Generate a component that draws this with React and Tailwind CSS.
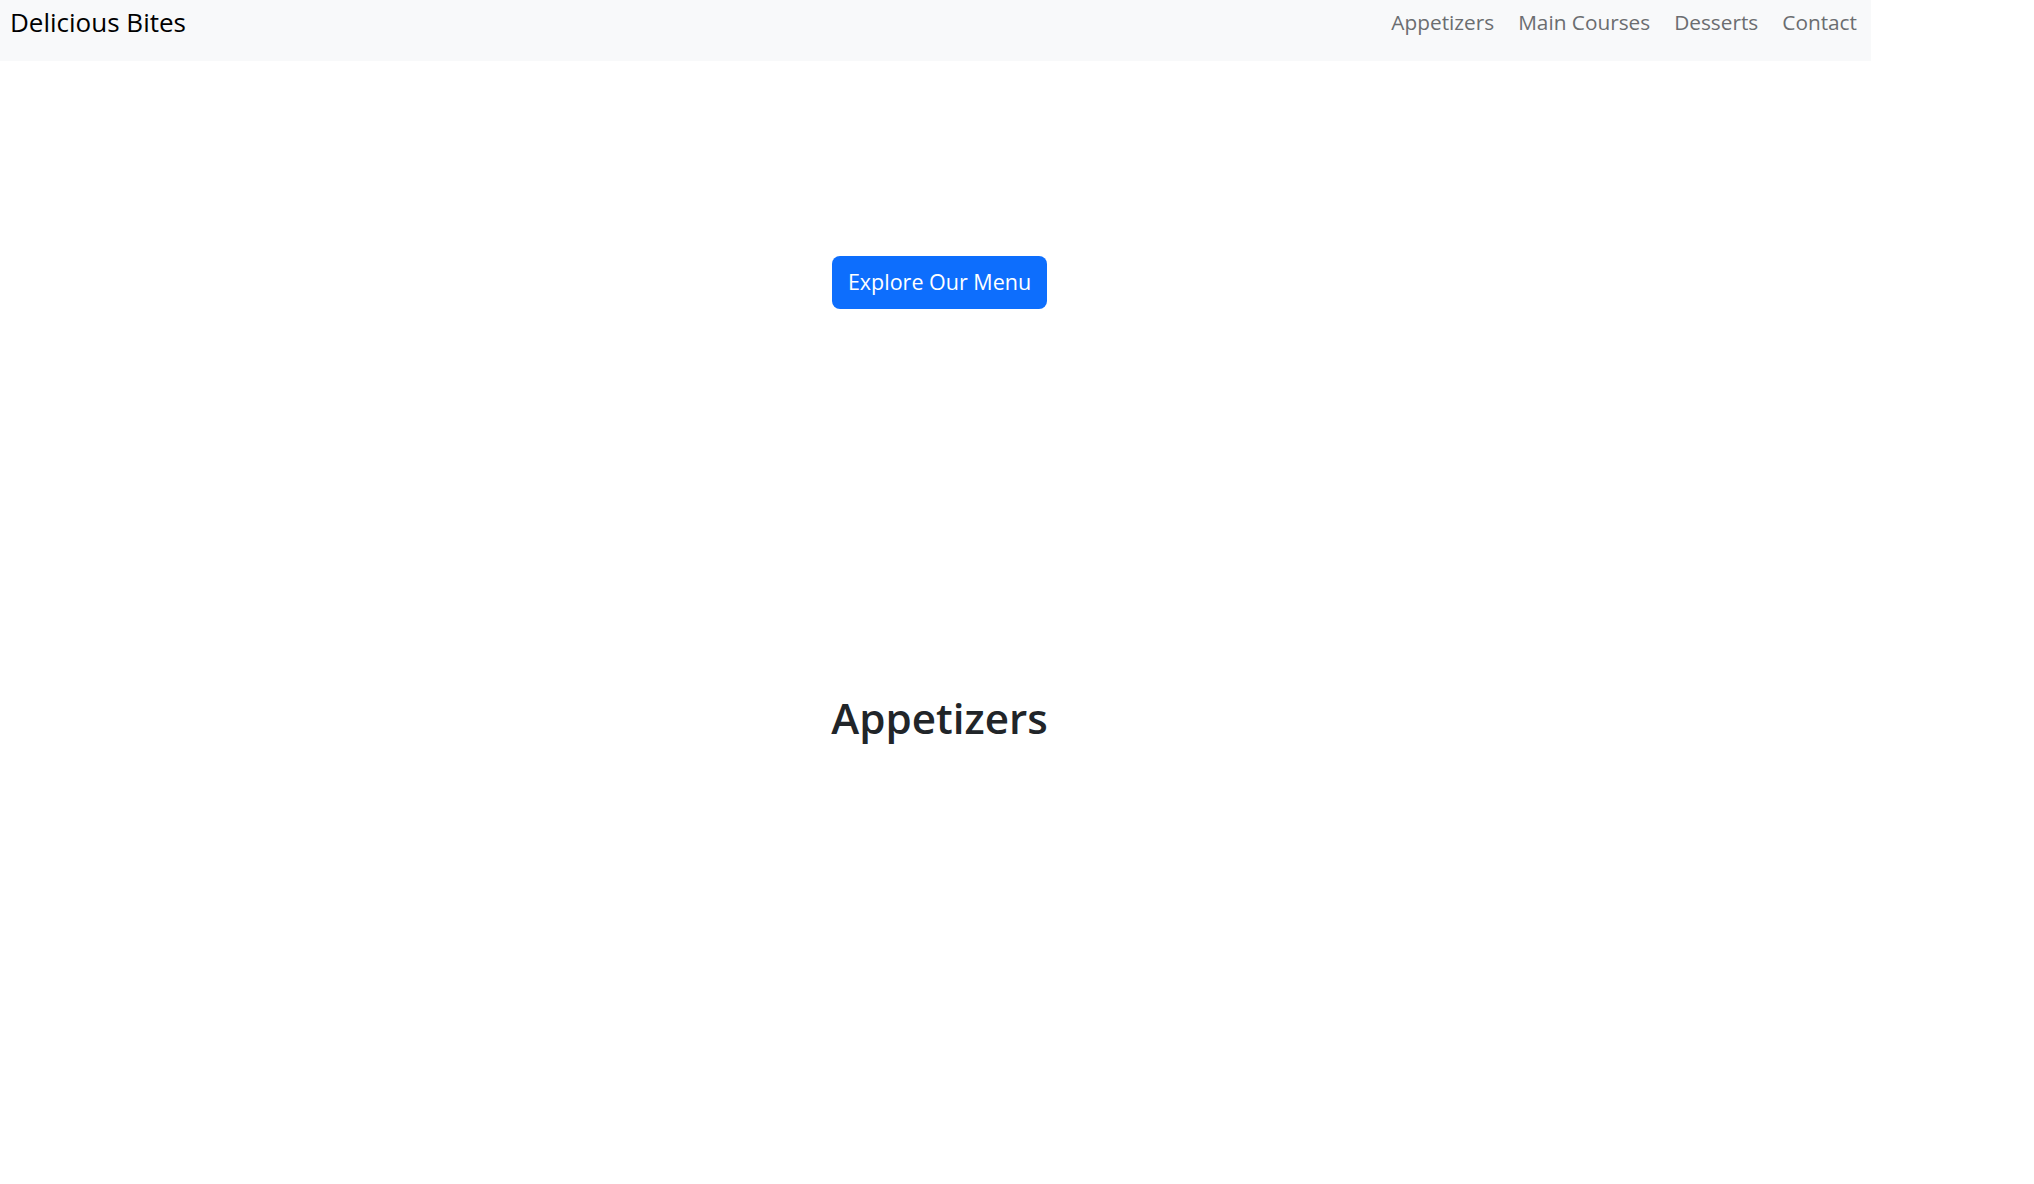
export default function App() {
    const links = ['Appetizers', 'Main Courses', 'Desserts', 'Contact']

    return (
        <div className="w-[1871px] min-h-screen bg-white font-['Open_Sans',sans-serif]">
            <nav className="h-[61px] bg-[#f8f9fa] flex items-start justify-between pl-[10px] pr-[14px]">
                <a className="text-[26px] leading-[45px] text-black">Delicious Bites</a>
                <ul className="flex gap-[24px] pt-[2px]">
                    {links.map((link) => (
                        <li key={link}>
                            <a className="text-[20.8px] leading-[40px] text-[#6b6d70]">{link}</a>
                        </li>
                    ))}
                </ul>
            </nav>

            <section className="flex flex-col items-center pl-[8px]">
                <button className="mt-[195px] w-[215px] h-[53px] rounded-[8px] bg-[#0d6efd] text-white text-[21.5px]">
                    Explore Our Menu
                </button>
                <h2 className="mt-[384px] text-[42.2px] font-semibold text-[#212529] leading-[1.2]">Appetizers</h2>
            </section>
        </div>
    )
}
